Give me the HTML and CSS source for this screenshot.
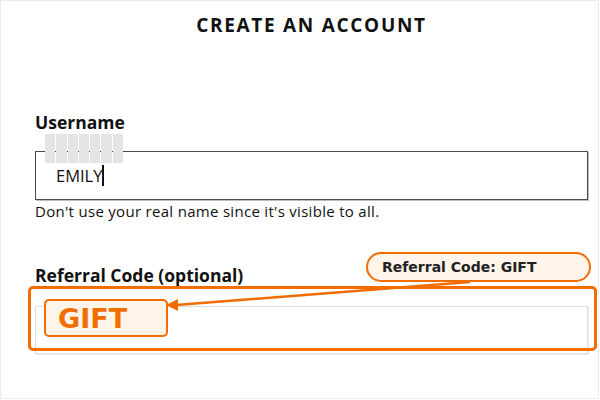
FILE: index.html
```html
<!DOCTYPE html>
<html>
<head>
<meta charset="utf-8">
<link rel="stylesheet" href="styles.css">
</head>
<body>
<div class="page">
  <h1 class="title">CREATE AN ACCOUNT</h1>

  <div class="field field-username">
    <label class="label">Username</label>
    <div class="input-wrap">
      <div class="input input-dark"><span class="value">EMILY</span><span class="caret"></span></div>
      <div class="redact"><i></i><i></i><i></i><i></i><i></i><i></i><i></i></div>
    </div>
    <p class="hint">Don't use your real name since it's visible to all.</p>
  </div>

  <div class="field field-referral">
    <label class="label">Referral Code (optional)</label>
    <div class="input input-light"></div>
  </div>

  <div class="hl-box"></div>
  <svg class="arrow" width="600" height="400" viewBox="0 0 600 400">
    <line x1="470" y1="282" x2="176" y2="305" stroke="#f26c00" stroke-width="2.5"/>
    <polygon points="166,305 178,299 178,311" fill="#f26c00"/>
  </svg>
  <div class="pill">Referral Code: GIFT</div>
  <div class="badge">GIFT</div>
</div>
</body>
</html>
```

FILE: styles.css
```css
* { box-sizing: border-box; }
html, body { margin: 0; padding: 0; background: #fff; }
.page {
  position: relative;
  width: 599px;
  height: 399px;
  border: 1px solid #ececec;
  padding: 12px 10px 0 34px;
  font-family: "Open Sans", "DejaVu Sans", sans-serif;
  color: #111;
}
.title {
  margin: 0;
  text-align: center;
  font-size: 19px;
  line-height: 24px;
  font-weight: 700;
  letter-spacing: 1.7px;
}
.field-username { margin-top: 74px; }
.label {
  display: block;
  font-size: 17.5px;
  line-height: 22px;
  font-weight: 700;
}
.field-username .label { margin-bottom: 18px; }
.input-wrap { position: relative; }
.input {
  height: 49px;
  background: #fff;
}
.input-dark {
  border: 1px solid #4a4a4a;
  box-shadow: 1px 1px 0 #bbb;
  padding: 11px 20px;
  display: flex;
  align-items: center;
  height: 49px;
  font-size: 16.5px;
  line-height: 22px;
}
.caret {
  display: inline-block;
  width: 2px;
  height: 21px;
  background: #111;
  margin-left: 0;
}
.redact {
  position: absolute;
  left: 10px;
  top: -17px;
  width: 78px;
  height: 29px;
  display: grid;
  grid-template-columns: repeat(7, 1fr);
  gap: 1px;
}
.redact i { background: #e5e5e5; }
.hint {
  margin: 1px 0 0;
  font-size: 15px;
  line-height: 20px;
  letter-spacing: 0.3px;
}
.field-referral { margin-top: 43px; }
.field-referral .label { margin-bottom: 20px; }
.input-light {
  height: 48px;
  border: 1px solid #dedede;
  box-shadow: 1px 1px 0 #eee;
}
.hl-box {
  position: absolute;
  left: 27px;
  top: 285px;
  width: 569px;
  height: 65px;
  border: 3px solid #f26c00;
  border-radius: 5px;
}
.arrow { position: absolute; left: -1px; top: -1px; }
.pill {
  position: absolute;
  left: 365px;
  top: 251px;
  width: 225px;
  height: 30px;
  border: 2px solid #f26c00;
  border-radius: 15px;
  background: #fff5ea;
  padding-left: 14px;
  display: flex;
  align-items: center;
  font-family: "DejaVu Sans", sans-serif;
  font-weight: 700;
  font-size: 14px;
  color: #222;
}
.badge {
  position: absolute;
  left: 43px;
  top: 298px;
  width: 124px;
  height: 38px;
  border: 2px solid #f26c00;
  border-radius: 5px;
  background: #fff4e8;
  padding-left: 12px;
  display: flex;
  align-items: center;
  font-family: "DejaVu Sans", sans-serif;
  font-weight: 700;
  font-size: 27px;
  color: #f26c00;
}
```
